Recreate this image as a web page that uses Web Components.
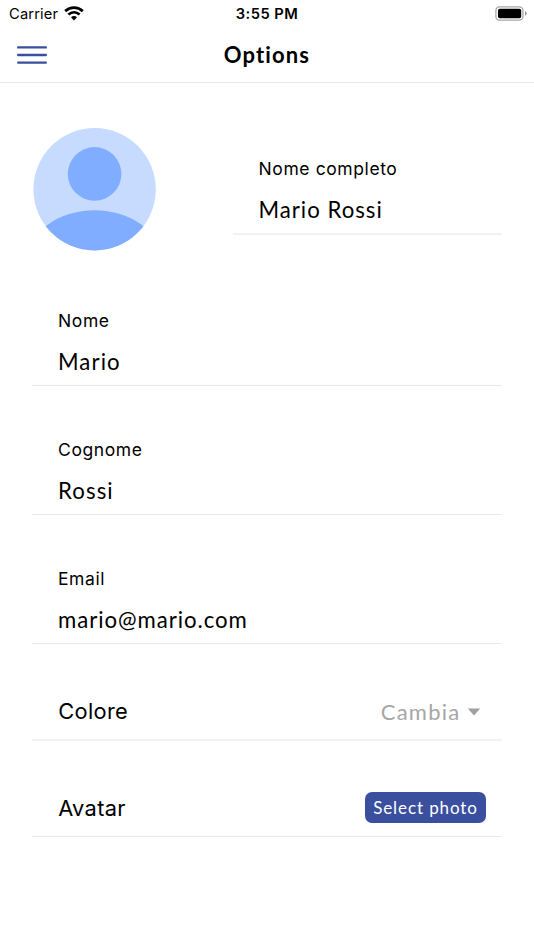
<!DOCTYPE html>
<html lang="it">
<head>
<meta charset="utf-8">
<title>Options</title>
<style>
html, body { margin: 0; background: #fff; }
</style>
</head>
<body>
<options-page></options-page>
<script>
const define = (name, html) => customElements.define(name, class extends HTMLElement {
  constructor() {
    super();
    this.attachShadow({ mode: 'open' }).innerHTML = html;
  }
});

define('status-bar', `
<style>
:host { display: grid; grid-template-columns: 1fr auto 1fr; align-items: center; height: 28px; box-sizing: border-box; padding: 0 7px 0 9px; font: 400 14.7px/28px Inter, sans-serif; color: #000; }
.left { display: flex; align-items: center; gap: 6px; letter-spacing: .15px; }
.time { font-weight: 600; letter-spacing: .45px; margin-right: 2px; }
.battery { justify-self: end; }
svg { display: block; }
.left svg { margin-top: -2px; }
.battery { margin-top: -2px; }
</style>
<div class="left"><span>Carrier</span>
<svg width="20" height="15" viewBox="0 0 20 15" fill="none" stroke="#000" stroke-width="2.8"><path d="M1.2 5.1C6.2.5 13.8.5 18.8 5.1"/><path d="M4.4 8.5C7.7 5.6 12.3 5.6 15.6 8.5"/><path d="M7 11.3C8.8 9.7 11.2 9.7 13 11.3L10 14.4Z" fill="#000" stroke="none"/></svg></div>
<span class="time">3:55 PM</span>
<svg class="battery" width="32" height="15" viewBox="0 0 32 15"><rect x=".9" y=".8" width="27" height="13.4" rx="3.6" fill="none" stroke="#a6a6a6" stroke-width="1.3"/><rect x="3" y="2.7" width="23.2" height="9.5" rx="1.8"/><path d="M30 5.1q3.5 2.4 0 4.8z" fill="#999"/></svg>`);

define('nav-bar', `
<style>
:host { display: grid; grid-template-columns: 1fr auto 1fr; align-items: center; height: 55px; box-sizing: border-box; padding: 0 17px; border-bottom: 1px solid #e6e6e6; font: 700 22px/26px Lato, sans-serif; color: #000; letter-spacing: 1.13px; }
svg { display: block; }
</style>
<svg width="30" height="18" viewBox="0 0 30 18" stroke="#3a4fa0" stroke-width="2.4" stroke-linecap="round"><path d="M1.2 1.4H28.8M1.2 9H28.8M1.2 16.6H28.8"/></svg>
<span><slot></slot></span>`);

define('user-avatar', `
<style>:host { display: block; width: 123px; height: 123px; } svg { display: block; }</style>
<svg width="123" height="123" viewBox="0 0 123 123"><defs><clipPath id="disc"><circle cx="61.6" cy="61.3" r="61.2"/></clipPath></defs><circle cx="61.6" cy="61.3" r="61.2" fill="#c6dbff"/><circle cx="61.6" cy="45.9" r="26.8" fill="#80adff"/><ellipse cx="61.6" cy="132" rx="66.5" ry="49.7" fill="#80adff" clip-path="url(#disc)"/></svg>`);

define('text-field', `
<style>
:host { display: flex; flex-direction: column; justify-content: flex-end; height: 129px; box-sizing: border-box; padding: 0 0 10px var(--inset, 26px); border-bottom: 1px solid #eaeaea; color: #000; }
.label { font: 400 17.5px/22px Inter, sans-serif; letter-spacing: .6px; margin-bottom: 17px; }
.value { font: 400 22.2px/26px Lato, sans-serif; letter-spacing: var(--track, 1.1px); }
</style>
<div class="label"><slot name="label"></slot></div>
<div class="value"><slot></slot></div>`);

define('option-row', `
<style>
:host { display: flex; align-items: center; justify-content: space-between; height: 97px; box-sizing: border-box; padding: 38px 15.5px 0 26.2px; border-bottom: 1px solid #eaeaea; font: 400 21.8px/26px Inter, sans-serif; letter-spacing: .35px; color: #000; }
</style>
<span><slot name="label"></slot></span><slot></slot>`);

define('select-menu', `
<style>
:host { display: flex; align-items: center; gap: 6px; margin: 2px 5.5px 0 0; font: 400 22px/26px Lato, sans-serif; letter-spacing: 1.25px; color: #a6a6a6; }
svg { display: block; }
</style>
<span><slot></slot></span><svg width="14" height="8" viewBox="0 0 14 8"><path d="M.8.5H13.2L7 7.4Z" fill="#a0a0a0"/></svg>`);

define('photo-button', `
<style>
:host { display: flex; align-items: center; justify-content: center; width: 121px; height: 31px; box-sizing: border-box; border-radius: 7px; background: #3a509f; color: #fff; font: 400 17px/22px Lato, sans-serif; letter-spacing: .9px; }
</style>
<span><slot></slot></span>`);

define('options-page', `
<style>
:host { display: block; height: 950px; background: #fff; overflow: hidden; }
main { padding: 45px 32.5px 0 32px; }
.profile { display: grid; grid-template-columns: 201px 1fr; align-items: start; height: 174px; }
.profile user-avatar { margin-left: 1px; }
.profile text-field { --inset: 25.5px; --track: 1px; height: 107px; border-bottom: 2px solid #f2f2f2; }
.colour { padding-top: 39px; border-bottom: 2px solid #f2f2f2; }
.photo { height: 96px; }
</style>
<status-bar></status-bar>
<nav-bar>Options</nav-bar>
<main>
<div class="profile"><user-avatar></user-avatar><text-field><span slot="label">Nome completo</span>Mario Rossi</text-field></div>
<text-field style="height:84px"><span slot="label">Nome</span>Mario</text-field>
<text-field><span slot="label">Cognome</span>Rossi</text-field>
<text-field style="--track:.95px"><span slot="label">Email</span>mario@mario.com</text-field>
<option-row class="colour"><span slot="label">Colore</span><select-menu>Cambia</select-menu></option-row>
<option-row class="photo"><span slot="label">Avatar</span><photo-button>Select photo</photo-button></option-row>
</main>`);
</script>
</body>
</html>
